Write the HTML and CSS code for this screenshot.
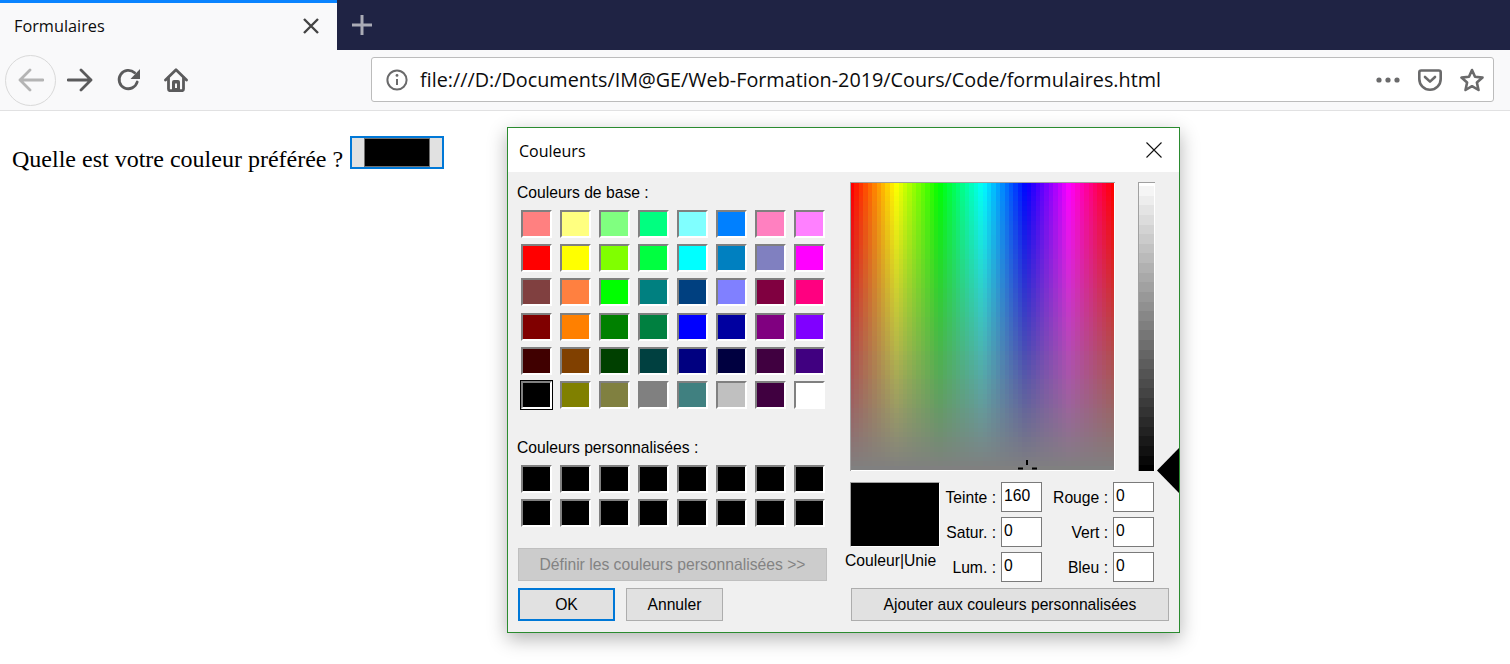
FILE: index.html
```html
<!DOCTYPE html>
<html lang="fr">
<head>
    <meta charset="UTF-8">
    <meta name="viewport" content="width=device-width, initial-scale=1.0">
    <title>Formulaires</title>
    <link rel="stylesheet" href="styles.css">
</head>
<body>
    <!-- Browser tabs -->
    <div class="tabstrip">
        <div class="tab">
            <span class="tab-title">Formulaires</span>
            <svg class="tab-close" width="18" height="18" viewBox="0 0 18 18"><path d="M2 2 L16 16 M16 2 L2 16"/></svg>
        </div>
        <svg class="tab-new" width="22" height="22" viewBox="0 0 22 22"><path d="M11 1 V21 M1 11 H21"/></svg>
    </div>

    <!-- Browser toolbar -->
    <div class="navbar">
        <div class="nav-back">
            <svg class="nav-icon" width="26" height="24" viewBox="0 0 26 24"><path d="M25 12 H2 M12 2 L2 12 L12 22"/></svg>
        </div>
        <div class="nav-btn">
            <svg class="nav-icon" width="26" height="24" viewBox="0 0 26 24"><path d="M1 12 H24 M14 2 L24 12 L14 22"/></svg>
        </div>
        <div class="nav-btn">
            <svg class="nav-icon" width="24" height="24" viewBox="0 0 24 24"><path d="M18.6 4.8 A9.2 9.2 0 1 0 21.2 14"/><path class="solid" d="M24 1 V11 H14.5 Z"/></svg>
        </div>
        <div class="nav-btn">
            <svg class="nav-icon" width="24" height="24" viewBox="0 0 24 24"><path d="M1.5 12 L12 1.8 L22.5 12"/><path d="M4.5 10 V21 Q4.5 22.7 6.2 22.7 H17.8 Q19.5 22.7 19.5 21 V10"/><path class="solid" fill-rule="evenodd" d="M8 23 V14 Q8 12 10 12 H14 Q16 12 16 14 V23 Z M11 15.5 V20 H13 V15.5 Z"/></svg>
        </div>
        <div class="urlbar">
            <svg class="url-info" width="22" height="22" viewBox="0 0 22 22"><circle cx="11" cy="11" r="9.6"/><path d="M11 10 V16"/><circle class="solid" cx="11" cy="6.4" r="1.4"/></svg>
            <span class="url-text">file:///D:/Documents/IM@GE/Web-Formation-2019/Cours/Code/formulaires.html</span>
            <div class="url-actions">
                <svg width="24" height="6" viewBox="0 0 24 6"><circle class="solid" cx="3" cy="3" r="2.6"/><circle class="solid" cx="12" cy="3" r="2.6"/><circle class="solid" cx="21" cy="3" r="2.6"/></svg>
                <svg width="24" height="22" viewBox="0 0 24 22"><path d="M3.2 1.5 H20.8 Q22.7 1.5 22.7 3.4 V10 A10.7 10.7 0 0 1 1.3 10 V3.4 Q1.3 1.5 3.2 1.5 Z"/><path d="M7 8 L12 12.6 L17 8"/></svg>
                <svg width="24" height="24" viewBox="0 0 24 24"><path d="M12 2 L15 8.8 L22.5 9.6 L16.9 14.5 L18.5 22 L12 18.2 L5.5 22 L7.1 14.5 L1.5 9.6 L9 8.8 Z"/></svg>
            </div>
        </div>
    </div>

    <!-- Page content -->
    <main class="page">
        <span class="question">Quelle est votre couleur préférée ?</span>
        <div class="color-input"><div class="color-input-value"></div></div>
    </main>

    <!-- Windows colour dialog -->
    <div class="dialog">
        <div class="dialog-title">
            <span>Couleurs</span>
            <svg class="dialog-close" width="16" height="16" viewBox="0 0 16 16"><path d="M0.5 0.5 L15.5 15.5 M15.5 0.5 L0.5 15.5"/></svg>
        </div>
        <div class="dialog-body">
            <div class="col-left">
                <div class="col-label">Couleurs de base :</div>
                <div class="swatches swatches-base" id="base-swatches"></div>
                <div class="col-label col-label-custom">Couleurs personnalisées :</div>
                <div class="swatches swatches-custom" id="custom-swatches"></div>
                <div class="win-btn win-btn-disabled btn-define">Définir les couleurs personnalisées &gt;&gt;</div>
                <div class="btn-row">
                    <div class="win-btn win-btn-default">OK</div>
                    <div class="win-btn">Annuler</div>
                </div>
            </div>
            <div class="col-right">
                <div class="picker">
                    <div class="spectrum">
                        <canvas id="spectrum" width="265" height="289"></canvas>
                        <svg class="crosshair" width="20" height="11" viewBox="0 0 20 11"><path d="M9 0 V5 M0 8.5 H5 M14 8.5 H19"/></svg>
                    </div>
                    <canvas class="lum" id="lum" width="17" height="289"></canvas>
                    <div class="lum-arrow"></div>
                </div>
                <div class="values">
                    <div class="preview-col">
                        <div class="preview"></div>
                        <div class="preview-label">Couleur|Unie</div>
                    </div>
                    <div class="fields">
                        <span>Teinte :</span><div class="field">160</div>
                        <span>Rouge :</span><div class="field">0</div>
                        <span>Satur. :</span><div class="field">0</div>
                        <span>Vert :</span><div class="field">0</div>
                        <span>Lum. :</span><div class="field">0</div>
                        <span>Bleu :</span><div class="field">0</div>
                    </div>
                </div>
                <div class="win-btn btn-add">Ajouter aux couleurs personnalisées</div>
            </div>
        </div>
    </div>

    <script src="script.js"></script>
</body>
</html>
```

FILE: styles.css
```css
/* General Styles */
body {
    background-color: #fff;
    color: #000;
    font-family: "Liberation Sans", Arial, sans-serif;
    margin: 0;
    padding: 0;
    overflow: hidden;
}

svg {
    display: block;
    fill: none;
}

/* Tabs */
.tabstrip {
    display: flex;
    align-items: center;
    height: 50px;
    background-color: #1f2344;
}

.tab {
    display: flex;
    align-items: center;
    justify-content: space-between;
    box-sizing: border-box;
    width: 337px;
    height: 50px;
    padding: 0 17px 0 14px;
    background-color: #f9f9fa;
    border-top: 3px solid #0a84ff;
    font-family: "Open Sans", sans-serif;
    font-size: 16.3px;
    color: #0c0c0d;
}

.tab-title {
    margin-top: -2px;
}

.tab-close {
    margin-top: -1px;
}

.tab-close path {
    stroke: #444;
    stroke-width: 2.4;
}

.tab-new {
    margin-left: 14px;
}

.tab-new path {
    stroke: #aaabb6;
    stroke-width: 3;
}

/* Toolbar */
.navbar {
    display: flex;
    align-items: center;
    box-sizing: border-box;
    height: 61px;
    padding: 0 16px 0 5px;
    background-color: #f9f9fa;
    border-bottom: 1px solid #e1e1e2;
}

.nav-back {
    display: flex;
    align-items: center;
    justify-content: center;
    box-sizing: border-box;
    width: 51px;
    height: 51px;
    border: 1px solid #d9d9d9;
    border-radius: 50%;
}

.nav-btn {
    display: flex;
    align-items: center;
    justify-content: center;
    width: 48px;
}

.nav-icon path {
    stroke: #5b5b5c;
    stroke-width: 2.8;
    stroke-linecap: round;
    stroke-linejoin: round;
}

.nav-back .nav-icon path {
    stroke: #b4b4b4;
}

.nav-icon .solid,
.solid {
    fill: #5b5b5c;
    stroke: none;
}

.urlbar {
    display: flex;
    align-items: center;
    flex: 1;
    box-sizing: border-box;
    height: 45px;
    margin-left: 171px;
    margin-top: -1px;
    padding: 0 9px 0 14px;
    background-color: #fff;
    border: 1px solid #bcbcbc;
    border-radius: 3px;
}

.url-info circle,
.url-info path {
    stroke: #6a6a6b;
    stroke-width: 2;
}

.url-info .solid {
    fill: #6a6a6b;
    stroke: none;
}

.url-text {
    margin-left: 12px;
    font-family: "Open Sans", sans-serif;
    font-size: 19.8px;
    color: #0c0c0d;
    white-space: nowrap;
}

.url-actions {
    display: flex;
    align-items: center;
    gap: 18px;
    margin-left: auto;
}

.url-actions svg .solid {
    fill: #6a6a6b;
}

.url-actions path {
    stroke: #6a6a6b;
    stroke-width: 2.6;
    stroke-linecap: round;
    stroke-linejoin: round;
}

/* Page */
.page {
    display: flex;
    align-items: flex-start;
    padding: 25px 0 0 12px;
}

.question {
    margin-top: 10px;
    font-family: "Liberation Serif", "Times New Roman", serif;
    font-size: 24px;
    line-height: 27px;
}

.color-input {
    box-sizing: border-box;
    width: 94px;
    height: 33px;
    margin-left: 7px;
    padding: 0 12px;
    background-color: #e1e1e1;
    border: 2px solid #0078d7;
}

.color-input-value {
    height: 100%;
    box-sizing: border-box;
    background-color: #000;
    border: 1px solid #707070;
}

/* Dialog */
.dialog {
    position: absolute;
    left: 507px;
    top: 127px;
    box-sizing: border-box;
    width: 673px;
    height: 506px;
    background-color: #f0f0f0;
    border: 1px solid #2a8b2f;
    box-shadow: 0 6px 18px rgba(0, 0, 0, 0.3);
}

.dialog-title {
    display: flex;
    align-items: center;
    justify-content: space-between;
    box-sizing: border-box;
    height: 44px;
    padding: 2px 17px 0 11px;
    background-color: #fff;
    font-family: "Open Sans", sans-serif;
    font-size: 16px;
}

.dialog-close {
    margin-top: -2px;
}

.dialog-close path {
    stroke: #111;
    stroke-width: 1.1;
}

.dialog-body {
    display: flex;
    gap: 23px;
    padding-left: 10px;
}

.col-left {
    width: 309px;
}

.col-label {
    box-sizing: border-box;
    height: 20px;
    margin: 10px 0 8px -1px;
    padding-top: 1px;
    font-size: 15.7px;
    line-height: 20px;
    white-space: nowrap;
}

.col-label-custom {
    margin-top: 28px;
}

.swatches {
    display: grid;
    grid-template-columns: repeat(8, 31px);
    grid-auto-rows: 28px;
    column-gap: 8px;
    padding-left: 3px;
}

.swatches-base {
    row-gap: 6.2px;
}

.swatches-custom {
    row-gap: 6px;
}

.swatch {
    box-sizing: border-box;
    border: 2px solid;
    border-color: #808080 #fff #fff #808080;
}

.swatch-selected {
    outline: 1px solid #000;
}

.win-btn {
    display: flex;
    align-items: center;
    justify-content: center;
    box-sizing: border-box;
    height: 33px;
    padding-top: 1px;
    background-color: #e1e1e1;
    border: 1px solid #adadad;
    font-size: 15.7px;
    white-space: nowrap;
}

.win-btn-disabled {
    background-color: #ccc;
    border-color: #bfbfbf;
    color: #838383;
}

.btn-define {
    margin-top: 21px;
}

.btn-row {
    display: flex;
    gap: 11px;
    margin-top: 7px;
}

.btn-row .win-btn {
    width: 97px;
}

.win-btn-default {
    border: 2px solid #0078d7;
}

.col-right {
    width: 329px;
    padding-top: 10px;
}

.picker {
    position: relative;
    display: flex;
    gap: 23px;
    height: 289px;
}

.spectrum {
    position: relative;
    width: 265px;
    height: 289px;
}

.spectrum canvas,
.lum {
    display: block;
}

.crosshair {
    position: absolute;
    left: 168px;
    top: 278px;
}

.crosshair path {
    stroke: #000;
    stroke-width: 2;
}

.lum-arrow {
    position: absolute;
    left: 307px;
    top: 266px;
    width: 22px;
    height: 45px;
    background-color: #000;
    clip-path: polygon(0 50%, 100% 0, 100% 100%);
}

.values {
    display: flex;
    margin-top: 11px;
}

.preview-col {
    width: 90px;
}

.preview {
    height: 65px;
    background-color: #000;
    border: 1px solid;
    border-color: #a0a0a0 #fff #fff #a0a0a0;
    box-sizing: border-box;
}

.preview-label {
    margin: 6px 0 0 -5px;
    font-size: 15.7px;
    line-height: 16px;
    white-space: nowrap;
}

.fields {
    display: grid;
    grid-template-columns: 56px 41px 61px 41px;
    grid-auto-rows: 30px;
    column-gap: 5px;
    row-gap: 5px;
    font-size: 15.7px;
}

.fields span {
    align-self: center;
    padding-top: 2px;
    text-align: right;
    white-space: nowrap;
}

.field {
    box-sizing: border-box;
    padding: 3px 0 0 2px;
    background-color: #fff;
    border: 1px solid #7a7a7a;
    line-height: 20px;
}

.btn-add {
    width: 318px;
    margin: 6px 0 0 1px;
    padding-top: 0;
}
```

FILE: script.js
```js
// Basic colours of the dialog, row by row
const baseColors = [
    "#ff8080", "#ffff80", "#80ff80", "#00ff80", "#80ffff", "#0080ff", "#ff80c0", "#ff80ff",
    "#ff0000", "#ffff00", "#80ff00", "#00ff40", "#00ffff", "#0080c0", "#8080c0", "#ff00ff",
    "#804040", "#ff8040", "#00ff00", "#008080", "#004080", "#8080ff", "#800040", "#ff0080",
    "#800000", "#ff8000", "#008000", "#008040", "#0000ff", "#0000a0", "#800080", "#8000ff",
    "#400000", "#804000", "#004000", "#004040", "#000080", "#000040", "#400040", "#400080",
    "#000000", "#808000", "#808040", "#808080", "#408080", "#c0c0c0", "#400040", "#ffffff"
];

function addSwatches(containerId, colors, selected) {
    const container = document.getElementById(containerId);
    colors.forEach((color, i) => {
        const swatch = document.createElement("div");
        swatch.className = i === selected ? "swatch swatch-selected" : "swatch";
        swatch.style.backgroundColor = color;
        container.appendChild(swatch);
    });
}

addSwatches("base-swatches", baseColors, 40);
addSwatches("custom-swatches", new Array(16).fill("#000000"), -1);

// Hue / saturation field, in coarse blocks like the Windows one
function drawSpectrum() {
    const canvas = document.getElementById("spectrum");
    const ctx = canvas.getContext("2d");
    const cols = 60;
    const rows = 60;

    for (let c = 0; c < cols; c++) {
        for (let r = 0; r < rows; r++) {
            const x = Math.round(c * canvas.width / cols);
            const y = Math.round(r * canvas.height / rows);
            const w = Math.round((c + 1) * canvas.width / cols) - x;
            const h = Math.round((r + 1) * canvas.height / rows) - y;
            ctx.fillStyle = `hsl(${c * 360 / (cols - 1)}, ${100 - r * 100 / (rows - 1)}%, 50%)`;
            ctx.fillRect(x, y, w, h);
        }
    }

    // sunken edge
    ctx.fillStyle = "#a0a0a0";
    ctx.fillRect(0, 0, canvas.width, 1);
    ctx.fillRect(0, 0, 1, canvas.height);
    ctx.fillStyle = "#fff";
    ctx.fillRect(canvas.width - 1, 1, 1, canvas.height);
    ctx.fillRect(1, canvas.height - 1, canvas.width, 1);
}

function drawLum() {
    const canvas = document.getElementById("lum");
    const ctx = canvas.getContext("2d");
    const steps = 30;
    const band = 9.63;

    // first band is a short white one
    ctx.fillStyle = "#fff";
    ctx.fillRect(0, 0, canvas.width, 5);
    for (let i = 1; i <= steps; i++) {
        const y = Math.round(4 + (i - 1) * band);
        const grey = Math.round(255 - 10 - (i - 1) * 245 / (steps - 1));
        ctx.fillStyle = `rgb(${grey}, ${grey}, ${grey})`;
        ctx.fillRect(0, y, canvas.width, canvas.height - y);
    }

    ctx.fillStyle = "#a0a0a0";
    ctx.fillRect(0, 0, canvas.width, 1);
    ctx.fillRect(0, 0, 1, canvas.height);
    ctx.fillStyle = "#fff";
    ctx.fillRect(canvas.width - 1, 1, 1, canvas.height);
}

drawSpectrum();
drawLum();
```
